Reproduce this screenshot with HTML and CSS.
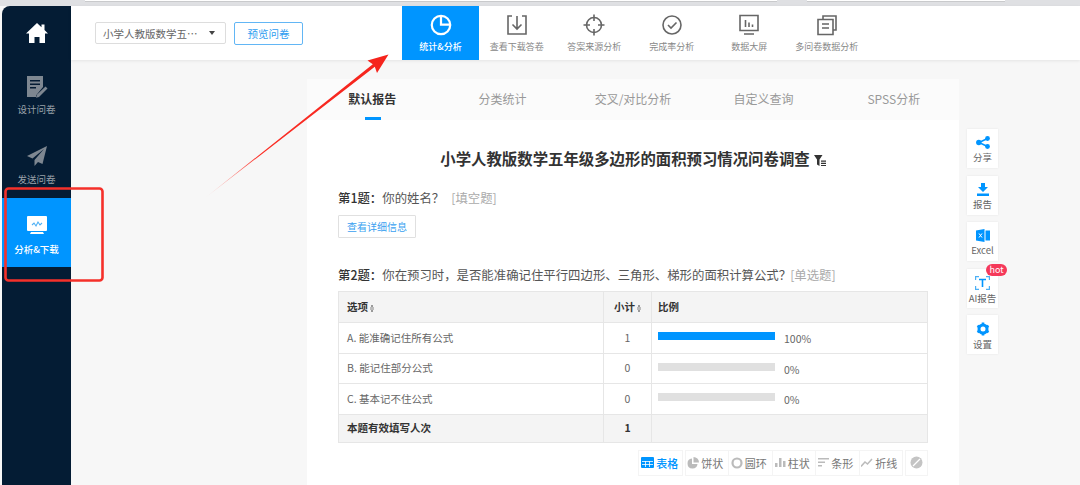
FILE: index.html
```html
<!DOCTYPE html>
<html lang="zh-CN">
<head>
<meta charset="utf-8">
<title>统计&amp;分析</title>
<link rel="stylesheet" href="styles.css">
</head>
<body>
<div class="chrome"><i class="btab b1"></i><i class="btab b2"></i></div>
<div class="app">
  <nav class="side">
    <a class="side-home"><svg width="24" height="22" viewBox="0 0 24 22"><path fill="#fff" d="M12 1 1 11.500h3V21h5.500v-6h5v6H20v-9.500h3L19.500 8V2.500h-3v2.800z"/></svg></a>
    <a class="side-item">
      <svg width="22" height="24" viewBox="0 0 22 24"><path fill="#7e8791" d="M1 1h16v11l-7 8.500V22H1z"/><path fill="#041c34" d="M4 5h10v1.500H4zM4 8.500h10V10H4zM4 12h6v1.500H4z"/><path fill="#7e8791" d="M19.500 11.500 21.500 13.500 13 22l-3 .8.800-3z"/></svg>
      <span>设计问卷</span>
    </a>
    <a class="side-item send">
      <svg width="22" height="22" viewBox="0 0 22 22"><path fill="#7e8791" d="M21 1 1 11l5.500 2.500L18 4 8.500 15v6l3.500-4 4.500 2z"/></svg>
      <span>发送问卷</span>
    </a>
    <a class="side-item active">
      <svg width="22" height="20" viewBox="0 0 22 20"><path fill="#fff" d="M2 1h18a1 1 0 0 1 1 1v13a1 1 0 0 1-1 1H2a1 1 0 0 1-1-1V2a1 1 0 0 1 1-1zM5 17h12l1 2H4z"/><path fill="none" stroke="#4db0f5" stroke-width="1.100" d="M6 10l2-2 2 3 2-4 2 3 2-2"/></svg>
      <span>分析&amp;下载</span>
    </a>
  </nav>
  <div class="content">
    <header class="top">
      <div class="top-left">
        <div class="select"><span class="select-text">小学人教版数学五…</span><i class="caret"></i></div>
        <button class="preview">预览问卷</button>
      </div>
      <div class="top-tabs">
        <a class="top-tab active">
          <svg width="26" height="26" viewBox="0 0 26 26" fill="none" stroke="#fff" stroke-width="2.400"><circle cx="13" cy="13" r="10"/><path d="M13 3v9.500h10"/></svg>
          <span>统计&amp;分析</span>
        </a>
        <a class="top-tab">
          <svg width="24" height="24" viewBox="0 0 24 24" fill="none" stroke="#666" stroke-width="1.600"><path d="M7 3H3v18h18V3h-4"/><path d="M12 3v13M7.500 11.500 12 16l4.500-4.500"/></svg>
          <span>查看下载答卷</span>
        </a>
        <a class="top-tab">
          <svg width="24" height="24" viewBox="0 0 24 24" fill="none" stroke="#666" stroke-width="1.600"><circle cx="12" cy="12" r="7.500"/><path d="M12 1.500V8M12 16v6.500M1.500 12H8M16 12h6.500"/></svg>
          <span>答案来源分析</span>
        </a>
        <a class="top-tab">
          <svg width="24" height="24" viewBox="0 0 24 24" fill="none" stroke="#666" stroke-width="1.600"><circle cx="12" cy="12" r="9"/><path d="m8 12 3 3 5.500-5.500"/></svg>
          <span>完成率分析</span>
        </a>
        <a class="top-tab">
          <svg width="24" height="24" viewBox="0 0 24 24" fill="none" stroke="#666" stroke-width="1.600"><path d="M3 2.500h18v15H3zM7 21h10"/><path d="M8.500 7v7M12 9.500V14M15.500 11.500V14"/></svg>
          <span>数据大屏</span>
        </a>
        <a class="top-tab">
          <svg width="24" height="24" viewBox="0 0 24 24" fill="none" stroke="#666" stroke-width="1.600"><path d="M8 6V3h13v14h-3"/><path d="M3 6.500h15v15H3zM7 11h7M7 15h7"/></svg>
          <span>多问卷数据分析</span>
        </a>
      </div>
    </header>
    <div class="stage">
      <main class="card">
        <div class="tabs">
          <a class="tab active">默认报告</a>
          <a class="tab">分类统计</a>
          <a class="tab">交叉/对比分析</a>
          <a class="tab">自定义查询</a>
          <a class="tab">SPSS分析</a>
        </div>
        <div class="report">
          <h1 class="title">小学人教版数学五年级多边形的面积预习情况问卷调查<svg class="filter" width="12" height="11" viewBox="0 0 12 11"><path fill="#333" d="M0 0h8.500L5.500 4.500V11L3 9.500v-5zM7 5.500h5v1.200H7zM7 7.800h5V9H7zM7 10h5v1H7z"/></svg></h1>
          <p class="q q1"><b>第1题&#65306;</b>你的姓名&#65311;<span class="kind">[填空题]</span></p>
          <button class="detail">查看详细信息</button>
          <p class="q q2"><b>第2题&#65306;</b>你在预习时&#65292;是否能准确记住平行四边形、三角形、梯形的面积计算公式&#65311;<span class="kind kind2">[单选题]</span></p>
          <table class="data">
            <colgroup><col class="c1"><col class="c2"><col class="c3"></colgroup>
            <thead>
              <tr><th>选项<i class="sort"></i></th><th class="mid">小计<i class="sort"></i></th><th>比例</th></tr>
            </thead>
            <tbody>
              <tr><td>A. 能准确记住所有公式</td><td class="mid">1</td><td><div class="ratio"><div class="bar"><div class="fill"></div></div><span>100%</span></div></td></tr>
              <tr><td>B. 能记住部分公式</td><td class="mid">0</td><td><div class="ratio"><div class="bar"></div><span>0%</span></div></td></tr>
              <tr><td>C. 基本记不住公式</td><td class="mid">0</td><td><div class="ratio"><div class="bar"></div><span>0%</span></div></td></tr>
            </tbody>
            <tfoot>
              <tr><th>本题有效填写人次</th><th class="mid">1</th><th></th></tr>
            </tfoot>
          </table>
          <div class="charts">
            <div class="cgroup">
              <a class="cbtn on"><svg width="13" height="11" viewBox="0 0 13 11"><rect width="13" height="11" rx="1" fill="#0095ff"/><path stroke="#fff" stroke-width=".8" d="M1 4.500h11M1 7.500h11M4.500 4v6M8.500 4v6"/></svg>表格</a>
            </div>
            <div class="cgroup">
              <a class="cbtn"><svg width="12" height="12" viewBox="0 0 12 12"><path fill="#bbb" d="M5 1.500a5 5 0 1 0 5.500 5.500H5zM6.500 0a5.500 5.500 0 0 1 5.500 5.500H6.500z"/></svg>饼状</a>
              <a class="cbtn"><svg width="12" height="12" viewBox="0 0 12 12"><circle cx="6" cy="6" r="4.500" fill="none" stroke="#bbb" stroke-width="2.200"/></svg>圆环</a>
              <a class="cbtn"><svg width="11" height="11" viewBox="0 0 11 11"><path fill="#bbb" d="M0 6h2.500v4H0zM4 1h2.500v9H4zM8 4h2.500v6H8z"/></svg>柱状</a>
              <a class="cbtn"><svg width="11" height="11" viewBox="0 0 11 11"><path fill="#bbb" d="M0 1h11v1.500H0zM0 4.500h7V6H0zM0 8h4v1.500H0z"/></svg>条形</a>
              <a class="cbtn"><svg width="12" height="11" viewBox="0 0 12 11"><path fill="none" stroke="#bbb" stroke-width="1.500" d="M0 9.500 4 5l2.500 2L11 2"/></svg>折线</a>
            </div>
            <div class="cgroup">
              <a class="cbtn solo"><svg width="13" height="13" viewBox="0 0 13 13"><circle cx="6.500" cy="6.500" r="6" fill="#c4c4c4"/><path stroke="#fff" stroke-width="1.200" d="m3 10 7-7"/></svg></a>
            </div>
          </div>
        </div>
      </main>
      <aside class="tools">
        <a class="tool"><svg width="14" height="13" viewBox="0 0 14 13"><path fill="none" stroke="#0095ff" stroke-width="1.500" d="M11.500 2.500 3 6.500l8.500 4"/><circle cx="11.500" cy="2.500" r="2.400" fill="#0095ff"/><circle cx="2.800" cy="6.500" r="2.700" fill="#0095ff"/><circle cx="11.500" cy="10.500" r="2.400" fill="#0095ff"/></svg><span>分享</span></a>
        <a class="tool"><svg width="14" height="13" viewBox="0 0 14 13"><path fill="#0095ff" d="M5 0h4v4h3L7 9 2 4h3zM1 10.500h12V13H1z"/></svg><span>报告</span></a>
        <a class="tool"><svg width="14" height="13" viewBox="0 0 14 13"><path fill="#0095ff" d="M0 1.500 8.500 0v13L0 11.500zM9.500 1.500H14v10H9.500z"/><path stroke="#fff" stroke-width="1" fill="none" d="m3 4.500 3 4M6 4.500l-3 4"/></svg><span>Excel</span></a>
        <a class="tool"><em class="hot">hot</em><svg width="15" height="14" viewBox="0 0 15 14"><path fill="none" stroke="#4db0f5" stroke-width="1.200" d="M.6 4V.6H4M11 .6h3.400V4M14.400 10v3.400H11M4 13.400H.6V10"/><path fill="none" stroke="#0095ff" stroke-width="1.600" d="M4 3.500h7M7.500 3.500v7.500"/></svg><span>AI报告</span></a>
        <a class="tool"><svg width="14" height="14" viewBox="0 0 14 14"><circle cx="7" cy="7" r="4" fill="none" stroke="#0095ff" stroke-width="3"/><path stroke="#0095ff" stroke-width="2.600" d="M7 .5v2.500M7 11v2.500M1.400 3.800 3.500 5M10.500 9l2.100 1.200M1.400 10.200 3.500 9M10.500 5l2.100-1.200"/></svg><span>设置</span></a>
      </aside>
    </div>
  </div>
</div>
<svg class="marks" width="1080" height="485" viewBox="0 0 1080 485">
  <rect x="5.500" y="188.500" width="97" height="92" rx="3" fill="none" stroke="#f5302a" stroke-width="2.600"/>
  <defs><linearGradient id="fade" x1="205" y1="198" x2="388" y2="55" gradientUnits="userSpaceOnUse"><stop offset="0" stop-color="#ff3b30" stop-opacity=".1"/><stop offset=".3" stop-color="#fb2e25"/><stop offset="1" stop-color="#f5231c"/></linearGradient></defs>
  <path fill="url(#fade)" d="M205 198 372.800 64.300 367.500 60.500 388.500 54.500 377 73 374.800 66.800z"/>
</svg>
</body>
</html>
```
FILE: styles.css
```css
* { box-sizing: border-box; }
html, body { margin: 0; height: 485px; overflow: hidden; }
body {
  background: #f7f7f7;
  font-family: "Noto Sans CJK SC", "Noto Sans", sans-serif;
  color: #555;
  position: relative;
}
a { display: block; text-decoration: none; }
button { font-family: inherit; background: #fff; cursor: pointer; }
p, h1 { margin: 0; }

.chrome { height: 6px; background: #dfe0e3; display: flex; align-items: flex-start; }
.btab { display: block; height: 2px; background: #fff; border-bottom: 1px solid #c9cacc; }
.b1 { width: 692px; margin-left: 85px; }
.b2 { width: 198px; margin-left: 30px; }
.app { display: flex; height: 479px; padding-left: 2px; }

.side {
  width: 69px;
  flex: none;
  background: #041c34;
  border-top-left-radius: 8px;
  display: flex;
  flex-direction: column;
}
.side-home { height: 54px; display: flex; align-items: center; justify-content: center; }
.side-item {
  height: 69px;
  display: flex;
  flex-direction: column;
  align-items: center;
  padding-top: 15px;
  gap: 4px;
  color: #9aa2aa;
  font-size: 9.500px;
  line-height: 13px;
}
.side-item.send { padding-top: 16px; gap: 6px; }
.side-item.active { background: #0095ff; color: #fff; font-weight: 500; padding-top: 17px; gap: 8px; }

.content { flex: 1; display: flex; flex-direction: column; min-width: 0; }
.top {
  height: 54px;
  flex: none;
  background: #fff;
  box-shadow: 0 1px 3px rgba(0, 0, 0, .08);
  display: flex;
  padding-left: 24px;
  position: relative;
}
.top-left { width: 307px; display: flex; align-items: flex-start; padding-top: 16px; gap: 8px; }
.select {
  width: 131px;
  height: 22px;
  border: 1px solid #ddd;
  border-radius: 2px;
  display: flex;
  align-items: center;
  justify-content: space-between;
  padding: 0 10px 0 7px;
  font-size: 10.500px;
  color: #666;
}
.caret { width: 0; height: 0; border: 3.500px solid transparent; border-top: 4px solid #444; border-bottom: 0; }
.preview {
  width: 69px;
  height: 23px;
  padding: 0;
  border: 1px solid #62b6f5;
  border-radius: 2px;
  color: #2f9df0;
  font-size: 10.500px;
}
.top-tabs { display: flex; }
.top-tab {
  width: 77.500px;
  display: flex;
  flex-direction: column;
  align-items: center;
  padding: 7px 2px 0 0;
  gap: 3px;
  font-size: 9px;
  line-height: 13px;
  color: #888;
}
.top-tab svg { height: 24px; }
.top-tab.active { width: 77px; background: #0095ff; color: #fff; font-weight: 500; padding-right: 0; }

.stage { flex: 1; display: flex; padding: 19px 0 0 236px; min-height: 0; position: relative; }
.card { width: 652px; flex: none; background: #fff; }
.tabs { display: flex; height: 41px; background: #fbfbfb; }
.tab {
  flex: 1;
  text-align: center;
  font-size: 12px;
  line-height: 39px;
  color: #999;
  position: relative;
}
.tab.active { color: #333; font-weight: 700; }
.tab.active::after {
  content: "";
  position: absolute;
  left: 58px;
  bottom: 0;
  width: 16px;
  height: 3px;
  background: #0095ff;
}
.report { padding: 0 31px; }
.title {
  text-align: center;
  font-size: 15.400px;
  line-height: 22px;
  font-weight: 700;
  color: #333;
  padding: 27px 0 0 0;
}
.filter { margin-left: 4px; vertical-align: -1px; }
.q { font-size: 12.400px; line-height: 18px; color: #555; }
.q b { font-weight: 500; color: #333; }
.q1 { padding-top: 20px; }
.kind { color: #aaa; margin-left: 7px; }
.kind2 { margin-left: -1px; }
.detail {
  display: block;
  margin-top: 8px;
  width: 78px;
  height: 23px;
  padding: 0;
  border: 1px solid #e0e0e0;
  border-radius: 1px;
  color: #3a9ff0;
  font-size: 10px;
}
.q2 { padding-top: 28px; white-space: nowrap; }

.data {
  margin-top: 7px;
  width: 590px;
  table-layout: fixed;
  border-collapse: collapse;
  font-size: 10.500px;
  border: 1px solid #e6e6e6;
}
.c1 { width: 265px; }
.c2 { width: 48px; }
.data th, .data td { border: 1px solid #e6e6e6; padding: 0 8px; text-align: left; line-height: 14px; }
.data th { background: #f4f4f4; color: #333; font-weight: 700; }
.data td { color: #666; }
.data .mid { text-align: center; }
.data td:last-child, .data th:last-child { padding-left: 6px; }
.data thead tr { height: 31px; }
.data tbody tr { height: 30.500px; }
.data tfoot tr { height: 28px; }
.sort {
  display: inline-block;
  width: 4px;
  height: 7px;
  margin-left: 2px;
  background: linear-gradient(#bbb, #bbb) center / 4px 3px no-repeat, linear-gradient(#999, #999) center / 2px 7px no-repeat;
  vertical-align: -1px;
}
.ratio { display: flex; align-items: center; gap: 9px; }
.ratio span { padding-top: 3px; }
.bar { width: 117px; height: 8px; background: #e0e0e0; margin-top: -3px; }
.fill { height: 100%; width: 100%; background: #0095ff; }

.charts { display: flex; justify-content: flex-end; gap: 2px; margin-top: 7px; }
.cgroup { display: flex; background: #f4f4f4; padding: 1px; gap: 1px; height: 26px; }
.cbtn {
  background: #fff;
  display: flex;
  align-items: center;
  justify-content: center;
  gap: 2px;
  width: 42.500px;
  padding-right: 3px;
  font-size: 11px;
  color: #777;
}
.cbtn.on { color: #0095ff; font-weight: 500; padding-right: 1px; }
.cbtn.solo { width: 21px; padding: 0; }

.tools { margin-left: 8px; padding-top: 50px; display: flex; flex-direction: column; gap: 7.500px; }
.tool {
  width: 31px;
  height: 39px;
  background: #fff;
  box-shadow: 0 0 2px rgba(0, 0, 0, .08);
  display: flex;
  flex-direction: column;
  align-items: center;
  padding-top: 7px;
  gap: 2px;
  font-size: 9.500px;
  line-height: 13px;
  color: #666;
  position: relative;
  white-space: nowrap;
}
.hot {
  position: absolute;
  top: -5px;
  right: -9px;
  width: 21px;
  height: 12px;
  border-radius: 6px;
  background: #f5395a;
  color: #fff;
  font-style: normal;
  font-size: 9px;
  line-height: 12px;
  text-align: center;
}
.marks { position: absolute; left: 0; top: 0; pointer-events: none; }
```
